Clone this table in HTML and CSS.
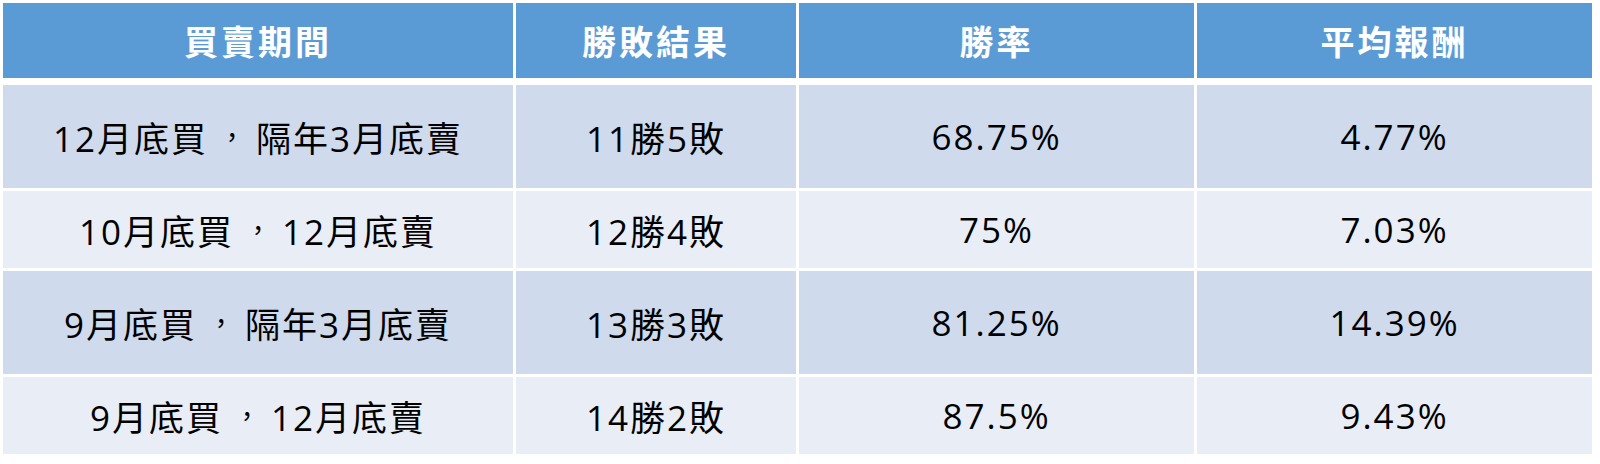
FILE: index.html
```html
<!DOCTYPE html>
<html lang="zh-TW">
<head>
<meta charset="utf-8">
<link rel="stylesheet" href="styles.css">
</head>
<body>
<div class="table">
  <div class="cell head">買賣期間</div>
  <div class="cell head">勝敗結果</div>
  <div class="cell head">勝率</div>
  <div class="cell head">平均報酬</div>

  <div class="cell odd">12月底買<span class="punct">，</span>隔年3月底賣</div>
  <div class="cell odd">11勝5敗</div>
  <div class="cell odd">68.75%</div>
  <div class="cell odd">4.77%</div>

  <div class="cell even">10月底買<span class="punct">，</span>12月底賣</div>
  <div class="cell even">12勝4敗</div>
  <div class="cell even">75%</div>
  <div class="cell even">7.03%</div>

  <div class="cell odd">9月底買<span class="punct">，</span>隔年3月底賣</div>
  <div class="cell odd">13勝3敗</div>
  <div class="cell odd">81.25%</div>
  <div class="cell odd">14.39%</div>

  <div class="cell even">9月底買<span class="punct">，</span>12月底賣</div>
  <div class="cell even">14勝2敗</div>
  <div class="cell even">87.5%</div>
  <div class="cell even">9.43%</div>
</div>
</body>
</html>
```

FILE: styles.css
```css
html, body {
  margin: 0;
  padding: 0;
  background: #ffffff;
}

body {
  padding: 3px 0 0 3px;
  font-family: "Open Sans", "Noto Sans CJK TC", sans-serif;
}

.table {
  display: grid;
  grid-template-columns: 510px 280px 395px 395px;
  grid-template-rows: 79px 103px 77px 103px 77px;
  column-gap: 3px;
  row-gap: 3px;
  width: 1590px;
}

.cell {
  display: flex;
  align-items: center;
  justify-content: center;
  font-size: 35px;
  letter-spacing: 2px;
  color: #000000;
  white-space: nowrap;
  box-sizing: border-box;
}

.punct {
  display: inline-block;
  font-size: 26px;
  width: 48px;
  letter-spacing: 0;
  text-align: center;
  transform: translateY(-1px);
}

.head {
  background: #5b9bd5;
  background-clip: padding-box;
  border-bottom: 4px solid #ffffff;
  color: #ffffff;
  font-weight: 700;
  font-family: "Noto Sans CJK TC", sans-serif;
  font-size: 34px;
  letter-spacing: 3px;
}

.odd {
  background: #cfdaec;
}

.even {
  background: #e9eef6;
}
```
